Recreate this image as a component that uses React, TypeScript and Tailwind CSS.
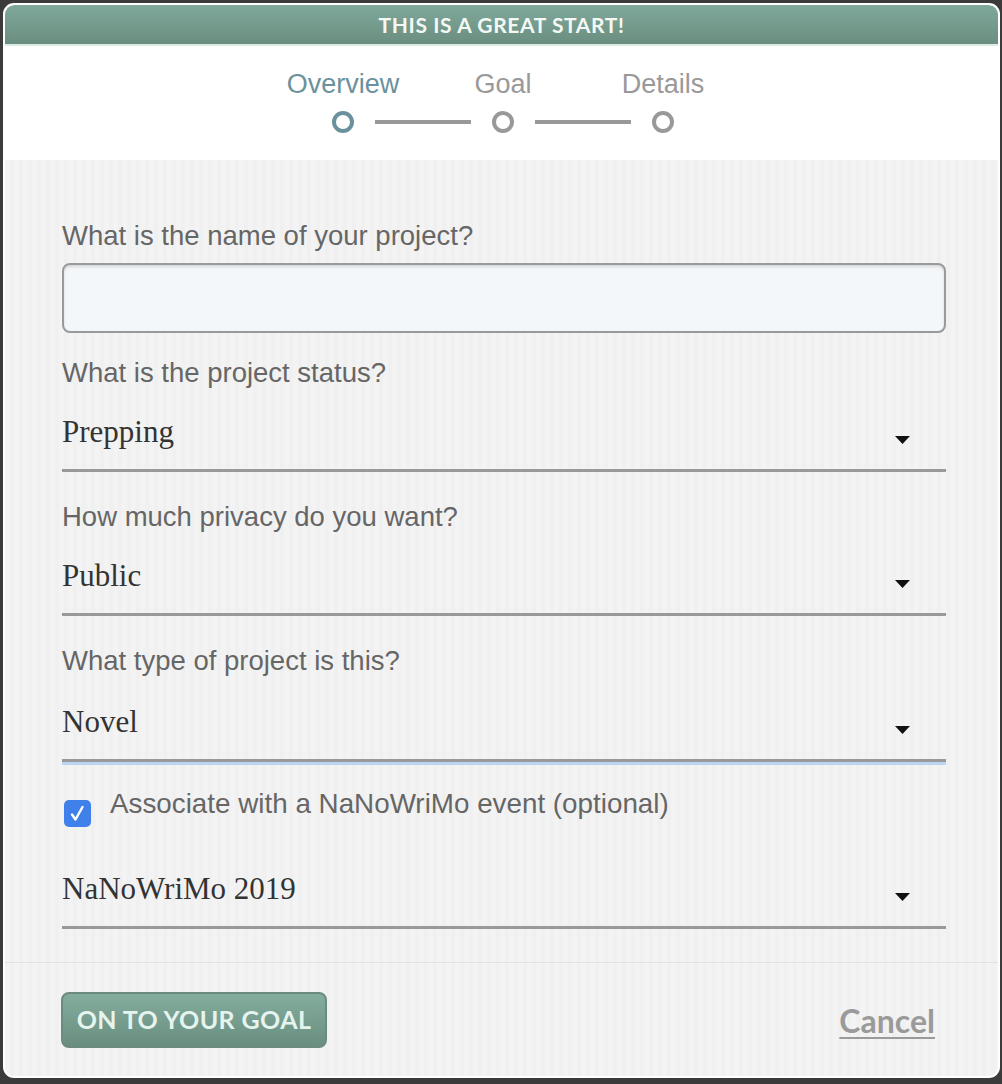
const sans = { fontFamily: '"Liberation Sans", Arial, sans-serif' }
const serif = { fontFamily: '"Liberation Serif", "Times New Roman", serif' }
const heading = { fontFamily: 'Lato, "Open Sans", sans-serif' }

const steps = ['Overview', 'Goal', 'Details']

function Arrow() {
  return (
    <svg width="15" height="8" viewBox="0 0 15 8" className="shrink-0">
      <polygon points="0,0 15,0 7.5,8" fill="#111" />
    </svg>
  )
}

function SelectBox({
  value,
  focused = false,
  className = '',
}: {
  value: string
  focused?: boolean
  className?: string
}) {
  return (
    <div
      className={`flex items-start justify-between pb-[17px] border-b-[3px] border-[#999] ${
        focused ? 'shadow-[0_3px_0_#bcd3f1]' : ''
      } ${className}`}
    >
      <span className="text-[31px] leading-[40px] text-[#333]" style={serif}>
        {value}
      </span>
      <span className="mt-[24px] mr-[36px]">
        <Arrow />
      </span>
    </div>
  )
}

function SelectField({
  label,
  value,
  focused = false,
  className = '',
}: {
  label: string
  value: string
  focused?: boolean
  className?: string
}) {
  return (
    <div className={className}>
      <p className="text-[27.5px] leading-[32px] text-[#666]" style={sans}>
        {label}
      </p>
      <SelectBox value={value} focused={focused} className={focused ? 'mt-[25px]' : 'mt-[23px]'} />
    </div>
  )
}

export default function App() {
  return (
    <div className="h-[1084px] bg-[#3b3b3b] pt-[3px] pl-[3px]">
      <div className="w-[997px] h-[1075px] rounded-[11px] border-2 border-white bg-white overflow-hidden flex flex-col">
        {/* header */}
        <div className="h-[41px] shrink-0 rounded-t-[9px] bg-gradient-to-b from-[#80a99b] to-[#6a8e80] border-b-2 border-[#dde9e3] flex items-center justify-center">
          <span
            className="text-[21px] font-bold tracking-[0.6px] text-[#f3f8f5] uppercase"
            style={heading}
          >
            This is a great start!
          </span>
        </div>

        {/* stepper */}
        <div className="h-[114px] shrink-0 bg-white pt-[22px] pl-[3px] flex flex-col items-center">
          <div className="flex">
            {steps.map((s, i) => (
              <span
                key={s}
                className={`w-[160px] text-center text-[27px] leading-[32px] ${
                  i === 0 ? 'text-[#6b919c]' : 'text-[#999]'
                }`}
                style={sans}
              >
                {s}
              </span>
            ))}
          </div>
          <div className="flex items-center mt-[11px]">
            {steps.map((s, i) => (
              <div key={s} className="flex items-center">
                {i > 0 && <div className="w-[96px] h-[4px] mx-[21px] bg-[#999]" />}
                <div
                  className={`w-[22px] h-[22px] rounded-full border-[4px] ${
                    i === 0 ? 'border-[#6b919c]' : 'border-[#999]'
                  }`}
                />
              </div>
            ))}
          </div>
        </div>

        {/* body */}
        <div className="flex-1 flex flex-col bg-[repeating-linear-gradient(90deg,#f3f3f3_0px,#f3f3f3_5px,#f0f0f0_5px,#f0f0f0_9px)]">
          <div className="pt-[60px] pl-[57px] pr-[52px] pb-[33px] border-b border-[#e2e2e2]">
            <p className="text-[27.5px] leading-[32px] text-[#666]" style={sans}>
              What is the name of your project?
            </p>
            <input
              type="text"
              className="mt-[11px] block w-full h-[70px] rounded-[8px] border-2 border-[#9a9a9a] bg-[#f3f7fa] shadow-[inset_0_2px_3px_rgba(0,0,0,0.12)] outline-none px-4 text-[26px]"
              style={sans}
            />

            <SelectField label="What is the project status?" value="Prepping" className="mt-[24px]" />
            <SelectField label="How much privacy do you want?" value="Public" className="mt-[29px]" />
            <SelectField
              label="What type of project is this?"
              value="Novel"
              focused
              className="mt-[29px]"
            />

            <div className="mt-[26px] flex items-start">
              <span className="mt-[11.5px] ml-[2px] w-[27px] h-[27px] rounded-[5px] bg-[#3f80ea] shrink-0">
                <svg width="27" height="27" viewBox="0 0 27 27">
                  <polyline
                    points="8,14.5 11.5,19.5 18.5,7"
                    fill="none"
                    stroke="#fff"
                    strokeWidth="2.4"
                    strokeLinecap="round"
                    strokeLinejoin="round"
                  />
                </svg>
              </span>
              <span className="ml-[19px] text-[27.8px] leading-[32px] text-[#666]" style={sans}>
                Associate with a NaNoWriMo event (optional)
              </span>
            </div>

            <SelectBox value="NaNoWriMo 2019" className="mt-[42px]" />
          </div>

          {/* footer */}
          <div className="flex-1 flex items-start justify-between pt-[29px] pl-[56px] pr-[63px]">
            <button
              className="w-[266px] h-[56px] rounded-[8px] border-2 border-[#6a8b7e] bg-gradient-to-b from-[#84ad9e] to-[#6a8e80] text-[25px] font-bold tracking-[0.4px] text-[#e5f4ee] uppercase flex items-center justify-center"
              style={heading}
            >
              On to your goal
            </button>
            <a
              href="#"
              className="mt-[5px] text-[32px] font-bold text-[#9a9a9a] underline decoration-2 underline-offset-[4px]"
              style={heading}
            >
              Cancel
            </a>
          </div>
        </div>
      </div>
    </div>
  )
}
